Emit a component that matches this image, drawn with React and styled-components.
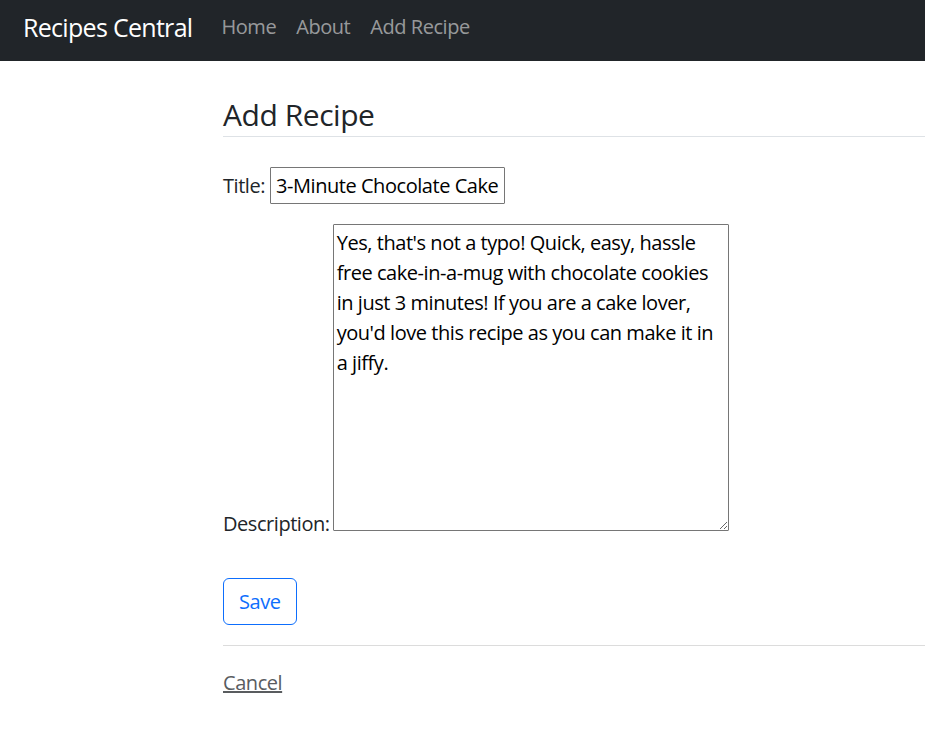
import React, { useState } from 'react';
import styled, { createGlobalStyle } from 'styled-components';

const GlobalStyle = createGlobalStyle`
body {
  margin: 0;
  font-family: 'Open Sans', 'Noto Sans', sans-serif;
  font-size: 20px;
  line-height: 30px;
  letter-spacing: -0.45px;
  color: #212529;
  background: #fff;
}
`

const NavBar = styled.nav`
display: flex;
align-items: center;
height: 61px;
box-sizing: border-box;
background-color: #212529;
padding: 0 23px 8px;
`
const Brand = styled.a`
color: #fff;
font-size: 25px;
letter-spacing: -0.7px;
margin-right: 29px;
text-decoration: none;
`
const NavLink = styled.a`
color: rgba(255, 255, 255, 0.55);
font-size: 20px;
margin-right: 20px;
text-decoration: none;
cursor: pointer;
`
const Main = styled.main`
padding-left: 223px;
`
const Title = styled.h4`
font-size: 30px;
font-weight: 400;
line-height: 36px;
margin: 36px 0 0;
padding-bottom: 3px;
border-bottom: 1px solid #dee2e6;
`
const Form = styled.form`
display: flex;
flex-direction: column;
align-items: flex-start;
margin-top: 30px;
`
const Row = styled.div`
display: flex;
align-items: ${p => (p.bottom ? 'flex-end' : 'center')};
gap: ${p => (p.bottom ? '3px' : '5px')};
margin-bottom: 20px;
`
const Label = styled.label`
line-height: ${p => (p.bottom ? '14px' : '30px')};
`
const Input = styled.input`
font: inherit;
letter-spacing: inherit;
color: #000;
width: 235px;
height: 37px;
box-sizing: border-box;
padding: 1px 5px;
border: 1px solid #767676;
border-radius: 1px;
`
const TextArea = styled.textarea`
font: inherit;
letter-spacing: inherit;
color: #000;
width: 396px;
height: 307px;
box-sizing: border-box;
padding: 3px 3px 1px;
border: 1px solid #767676;
border-radius: 1px;
resize: both;
`
const SaveButton = styled.button`
font: inherit;
letter-spacing: inherit;
color: #0d6efd;
background: transparent;
border: 1px solid #0d6efd;
border-radius: 6px;
padding: 7.5px 15px;
margin-top: 27px;
cursor: pointer;
`
const Divider = styled.hr`
border: 0;
border-top: 1px solid #dcdcdc;
margin: 20px 0 22px;
`
const CancelLink = styled.a`
color: #595c5f;
text-decoration: underline;
cursor: pointer;
`

function App() {
  const [form, setForm] = useState({
    title: '3-Minute Chocolate Cake',
    description: "Yes, that's not a typo! Quick, easy, hassle free cake-in-a-mug with chocolate cookies in just 3 minutes! If you are a cake lover, you'd love this recipe as you can make it in a jiffy."
  })

  const onChangeInput = (e) => {
    setForm({ ...form, [e.target.name]: e.target.value })
  }

  return (
    <>
      <GlobalStyle />
      <NavBar>
        <Brand>Recipes Central</Brand>
        <NavLink>Home</NavLink>
        <NavLink>About</NavLink>
        <NavLink>Add Recipe</NavLink>
      </NavBar>
      <Main>
        <Title>Add Recipe</Title>
        <Form onSubmit={e => e.preventDefault()}>
          <Row>
            <Label>Title:</Label>
            <Input name="title" value={form.title} onChange={onChangeInput} />
          </Row>
          <Row bottom>
            <Label bottom>Description:</Label>
            <TextArea name="description" value={form.description} onChange={onChangeInput} />
          </Row>
          <SaveButton>Save</SaveButton>
        </Form>
        <Divider />
        <CancelLink>Cancel</CancelLink>
      </Main>
    </>
  )
}

export default App;
